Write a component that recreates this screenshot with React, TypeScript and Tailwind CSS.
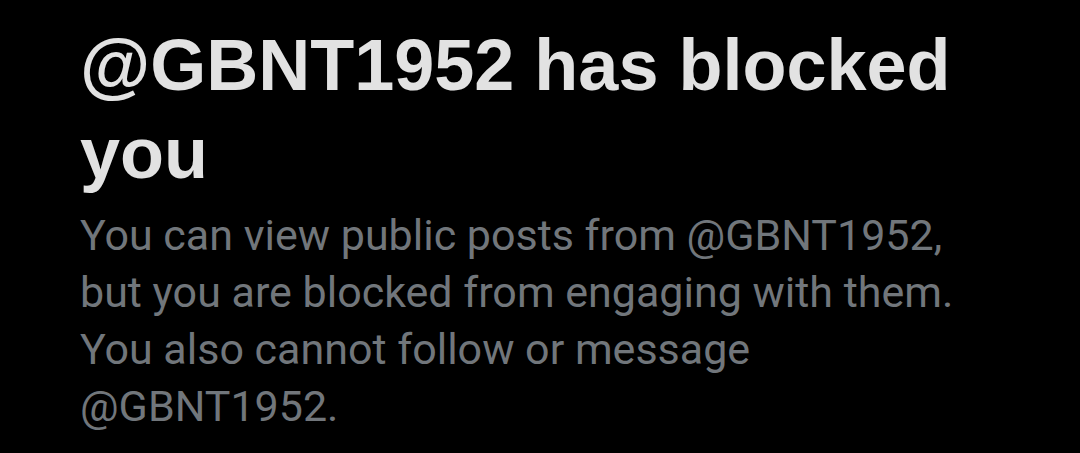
export default function App() {
  return (
    <div className="w-[1080px] h-[453px] bg-black overflow-hidden flex flex-col pl-[80px] pt-[21px]">
      <h1 className="text-[72px] leading-[88px] font-bold text-[#e2e2e2] w-[920px] font-['Liberation_Sans',Arial,sans-serif]">
        @GBNT1952 has blocked you
      </h1>
      <p className="text-[43px] leading-[57px] text-[#71767b] w-[960px] mt-[10px] font-['Roboto','Noto_Sans',sans-serif]">
        You can view public posts from @GBNT1952,
        <br />
        but you are blocked from engaging with them.
        <br />
        You also cannot follow or message
        <br />
        @GBNT1952.
      </p>
    </div>
  );
}
